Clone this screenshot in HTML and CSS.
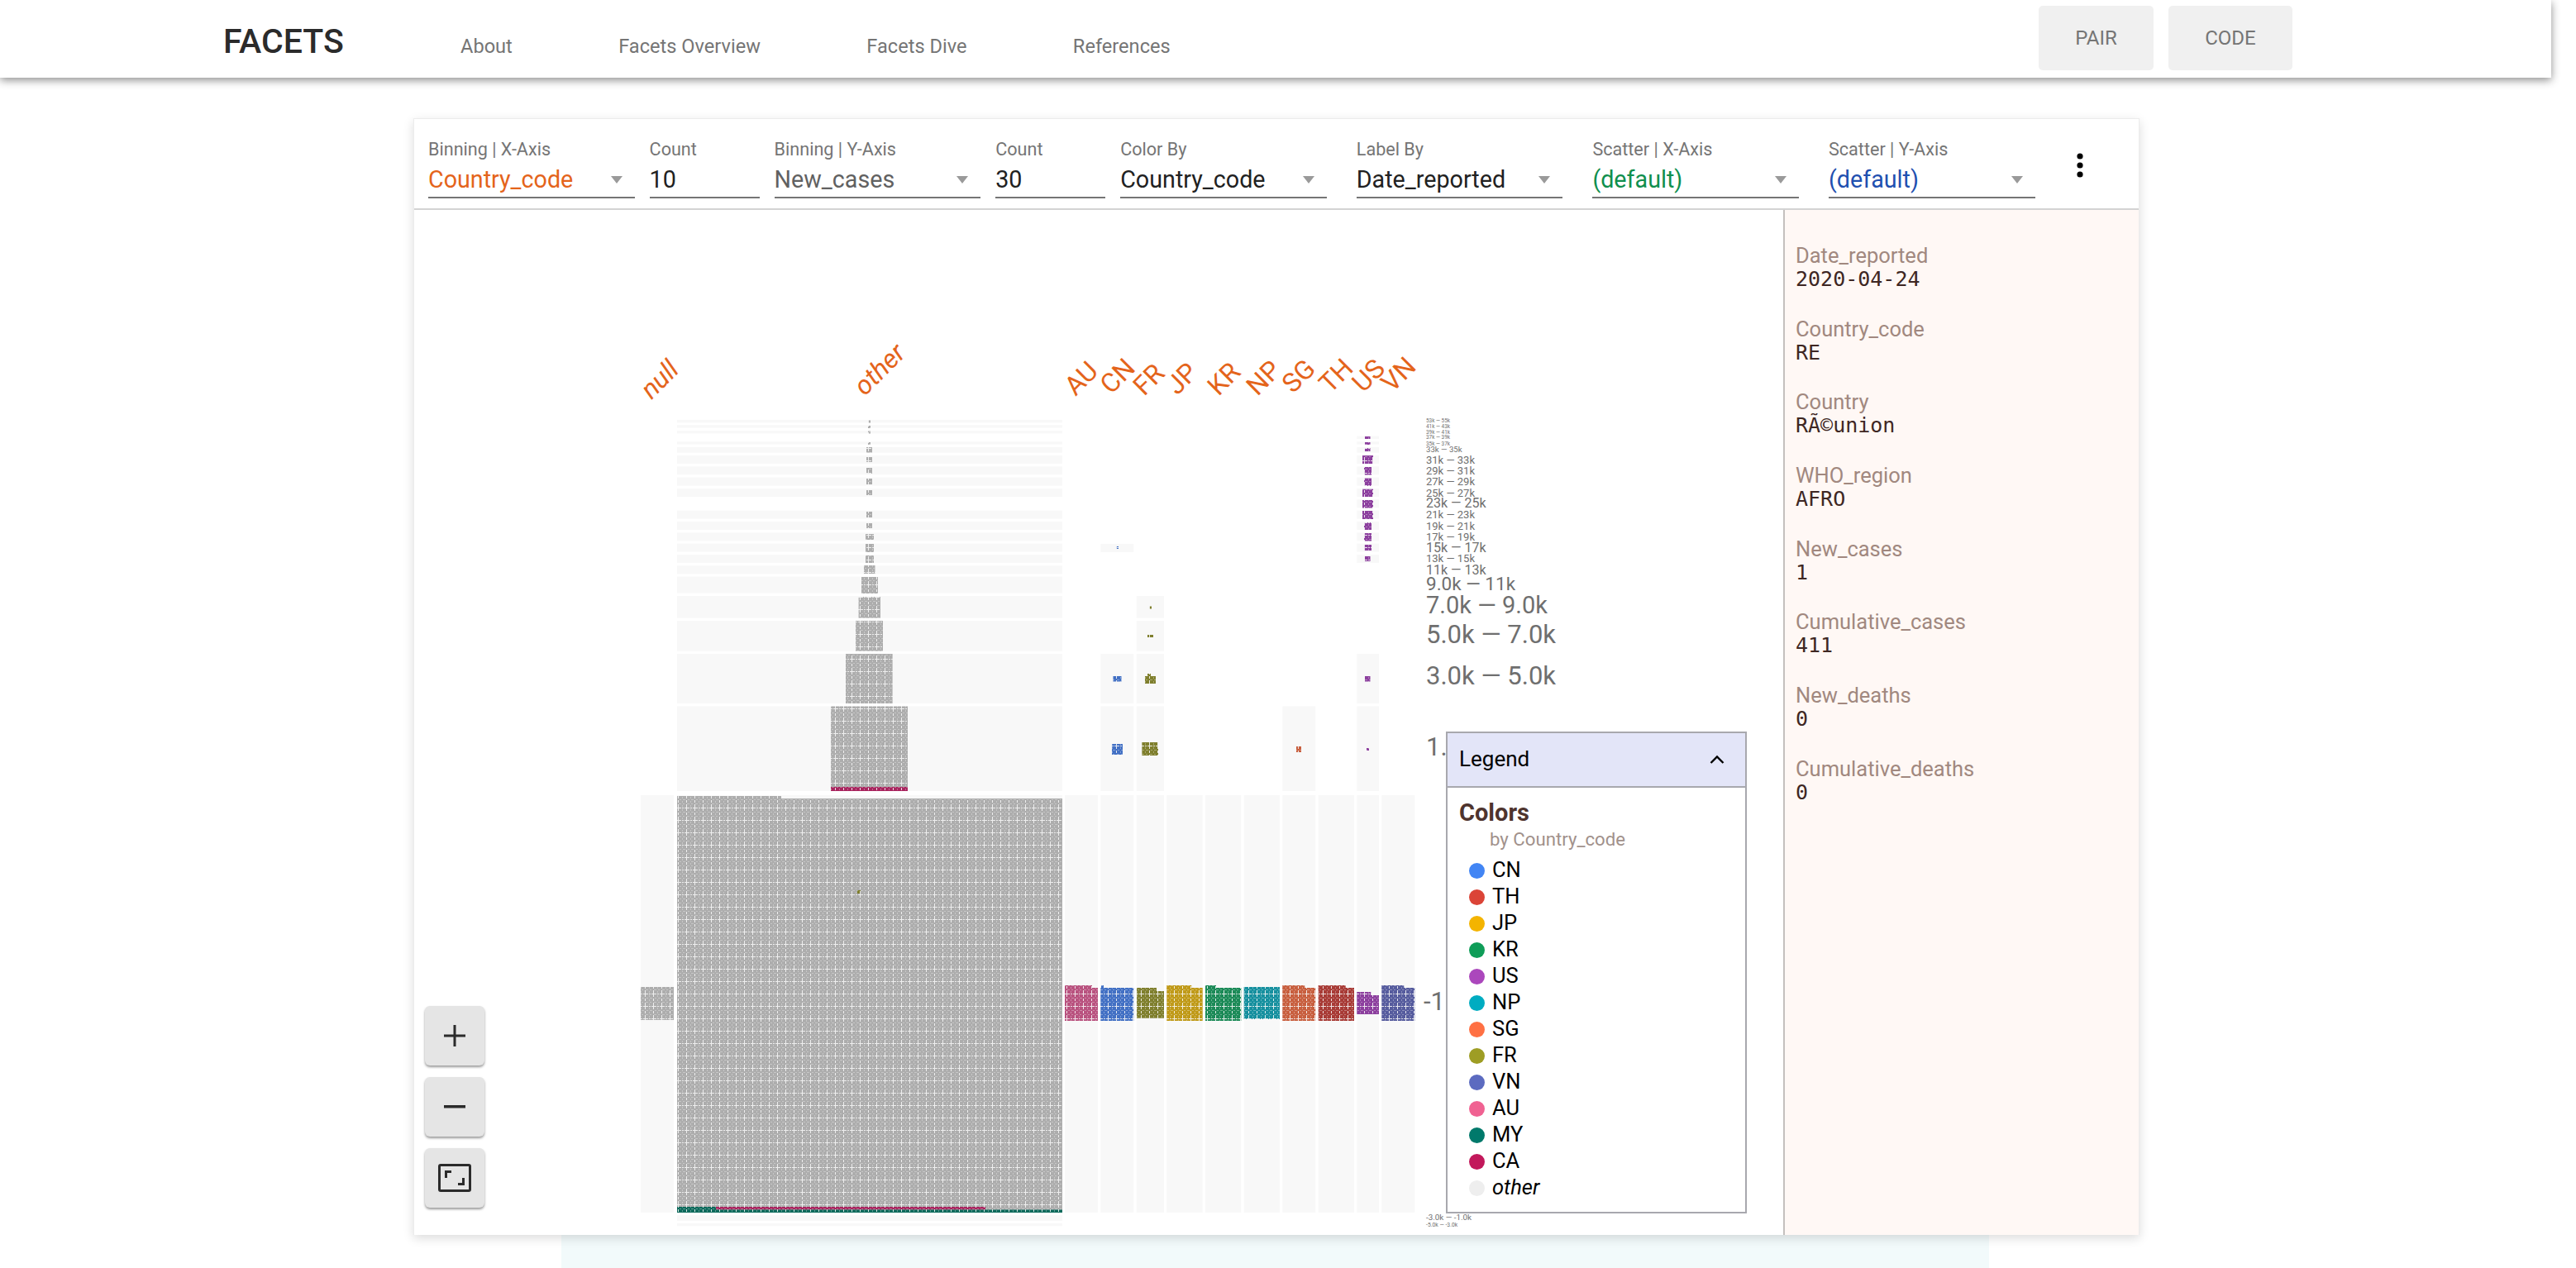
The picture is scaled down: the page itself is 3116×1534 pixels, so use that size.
FILE: index.html
```html
<!DOCTYPE html>
<html lang="en">
<head>
<meta charset="utf-8">
<title>Facets</title>
<link rel="stylesheet" href="styles.css">
</head>
<body>
<header class="topbar">
  <div class="logo">FACETS</div>
  <nav class="nav">
    <a class="nav-link">About</a>
    <a class="nav-link">Facets Overview</a>
    <a class="nav-link">Facets Dive</a>
    <a class="nav-link">References</a>
  </nav>
  <div class="top-actions">
    <button class="top-btn pair">PAIR</button>
    <button class="top-btn code">CODE</button>
  </div>
</header>

<main class="panel">
  <div class="toolbar">
    <div class="field sel"><span class="f-label">Binning | X-Axis</span><div class="f-value orange"><span>Country_code</span><i class="arrow"></i></div></div>
    <div class="field num"><span class="f-label">Count</span><div class="f-value"><span>10</span></div></div>
    <div class="field sel"><span class="f-label">Binning | Y-Axis</span><div class="f-value grey"><span>New_cases</span><i class="arrow"></i></div></div>
    <div class="field num"><span class="f-label">Count</span><div class="f-value"><span>30</span></div></div>
    <div class="field sel"><span class="f-label">Color By</span><div class="f-value"><span>Country_code</span><i class="arrow"></i></div></div>
    <div class="field sel far"><span class="f-label">Label By</span><div class="f-value"><span>Date_reported</span><i class="arrow"></i></div></div>
    <div class="field sel far"><span class="f-label">Scatter | X-Axis</span><div class="f-value green"><span>(default)</span><i class="arrow"></i></div></div>
    <div class="field sel far"><span class="f-label">Scatter | Y-Axis</span><div class="f-value blue"><span>(default)</span><i class="arrow"></i></div></div>
    <svg class="more" viewBox="0 0 8 30" width="8" height="30"><circle cx="4" cy="4" r="3.6"/><circle cx="4" cy="15" r="3.6"/><circle cx="4" cy="26" r="3.6"/></svg>
  </div>
  <div class="content">
    <section class="stage">
      <svg class="chart" viewBox="501 254 1656 1240" width="1656" height="1240">
        <defs>
          <pattern id="tile" width="10" height="15" patternUnits="userSpaceOnUse" x="1" y="3">
            <rect width="10" height="15" fill="#fff"/>
            <g fill="#222">
              <rect x="9" y="0" width="1" height="3"/><rect x="9" y="5" width="1" height="3"/><rect x="9" y="10" width="1" height="4"/>
              <rect x="0" y="14" width="3" height="1"/><rect x="4" y="14" width="2" height="1"/><rect x="7" y="14" width="3" height="1"/>
            </g>
            <g fill="#aaa">
              <rect x="1" y="4" width="2" height="1"/><rect x="5" y="4" width="3" height="1"/>
              <rect x="0" y="9" width="3" height="1"/><rect x="5" y="9" width="2" height="1"/>
              <rect x="4" y="1" width="1" height="2"/><rect x="4" y="6" width="1" height="2"/><rect x="4" y="11" width="1" height="2"/>
            </g>
          </pattern>
          <mask id="dots" maskUnits="userSpaceOnUse" x="501" y="254" width="1656" height="1240">
            <rect x="501" y="254" width="1656" height="1240" fill="url(#tile)"/>
          </mask>
        </defs>

        <g class="axis">
          <text class="em" transform="translate(788 484) rotate(-45)">null</text>
          <text class="em" transform="translate(1046 480) rotate(-45)">other</text>
          <text transform="translate(1301 480) rotate(-45)">AU</text>
          <text transform="translate(1344 478) rotate(-45)">CN</text>
          <text transform="translate(1384 480) rotate(-45)">FR</text>
          <text transform="translate(1424 479) rotate(-45)">JP</text>
          <text transform="translate(1474 480) rotate(-45)">KR</text>
          <text transform="translate(1521 480) rotate(-45)">NP</text>
          <text transform="translate(1564 477) rotate(-45)">SG</text>
          <text transform="translate(1609 477) rotate(-45)">TH</text>
          <text transform="translate(1649 476) rotate(-45)">US</text>
          <text transform="translate(1684 476) rotate(-45)">VN</text>
        </g>

        <g class="cells">
          <rect x="775" y="962" width="40" height="505"/>
          <rect x="819" y="508" width="466" height="3.3"/><rect x="819" y="514.3" width="466" height="3.3"/><rect x="819" y="521" width="466" height="3.3"/>
          <rect x="819" y="534.3" width="466" height="3.3"/><rect x="819" y="541" width="466" height="6.7"/><rect x="819" y="551" width="466" height="10"/>
          <rect x="819" y="564.3" width="466" height="10"/><rect x="819" y="577.6" width="466" height="10"/><rect x="819" y="591" width="466" height="10"/>
          <rect x="819" y="617.6" width="466" height="10"/><rect x="819" y="631" width="466" height="10"/><rect x="819" y="644.3" width="466" height="10"/>
          <rect x="819" y="657.6" width="466" height="10"/><rect x="819" y="671" width="466" height="10"/><rect x="819" y="684.3" width="466" height="10"/>
          <rect x="819" y="697.6" width="466" height="20"/><rect x="819" y="721" width="466" height="26.7"/><rect x="819" y="751" width="466" height="36.7"/>
          <rect x="819" y="791" width="466" height="60"/><rect x="819" y="854.5" width="466" height="102.5"/><rect x="819" y="962" width="466" height="505"/>
          <rect x="819" y="1470" width="466" height="7"/><rect x="819" y="1480" width="466" height="3.3"/>

          <rect x="1288" y="962" width="40" height="505"/><rect x="1331.3" y="962" width="40" height="505"/><rect x="1374.7" y="962" width="33.3" height="505"/>
          <rect x="1411.3" y="962" width="43.4" height="505"/><rect x="1458" y="962" width="43.3" height="505"/><rect x="1504.7" y="962" width="43.3" height="505"/>
          <rect x="1551.3" y="962" width="40" height="505"/><rect x="1594.7" y="962" width="43.3" height="505"/><rect x="1641.3" y="962" width="26.7" height="505"/>
          <rect x="1671.3" y="962" width="40" height="505"/>

          <rect x="1331.3" y="658" width="40" height="10"/><rect x="1331.3" y="791" width="40" height="60"/><rect x="1331.3" y="854.5" width="40" height="102.5"/>
          <rect x="1374.7" y="721" width="33.3" height="26.7"/><rect x="1374.7" y="751" width="33.3" height="36.7"/><rect x="1374.7" y="791" width="33.3" height="60"/><rect x="1374.7" y="854.5" width="33.3" height="102.5"/>
          <rect x="1551.3" y="854.5" width="40" height="102.5"/>

          <rect x="1641.3" y="527.6" width="26.7" height="3.3"/><rect x="1641.3" y="534.3" width="26.7" height="3.3"/><rect x="1641.3" y="541" width="26.7" height="6.7"/>
          <rect x="1641.3" y="551" width="26.7" height="10"/><rect x="1641.3" y="564.3" width="26.7" height="10"/><rect x="1641.3" y="577.6" width="26.7" height="10"/>
          <rect x="1641.3" y="591" width="26.7" height="10"/><rect x="1641.3" y="604.3" width="26.7" height="10"/><rect x="1641.3" y="617.6" width="26.7" height="10"/>
          <rect x="1641.3" y="631" width="26.7" height="10"/><rect x="1641.3" y="644.3" width="26.7" height="10"/><rect x="1641.3" y="657.6" width="26.7" height="10"/>
          <rect x="1641.3" y="671" width="26.7" height="10"/><rect x="1641.3" y="791" width="26.7" height="60"/><rect x="1641.3" y="854.5" width="26.7" height="102.5"/>
        </g>

        <g class="blocks" mask="url(#dots)">
          <g class="k-other">
            <rect x="775" y="1194" width="40" height="40"/>
            <rect x="1050" y="508.5" width="3" height="3"/><rect x="1050" y="515" width="3" height="3"/><rect x="1050" y="521.5" width="3" height="3"/>
            <rect x="1050" y="535" width="3" height="3"/><rect x="1048" y="541" width="7" height="6.5"/><rect x="1048" y="553" width="7" height="6"/>
            <rect x="1048" y="566" width="7" height="7"/><rect x="1048" y="579" width="7" height="7"/><rect x="1048" y="593" width="7" height="6"/>
            <rect x="1048" y="619" width="7" height="7"/><rect x="1048" y="633" width="7" height="6"/><rect x="1047" y="646" width="10" height="7"/>
            <rect x="1047" y="658" width="10" height="10"/><rect x="1047" y="672" width="10" height="9"/><rect x="1045" y="684" width="13.5" height="10"/>
            <rect x="1042" y="698" width="20" height="20"/><rect x="1038.6" y="722" width="26.4" height="25.6"/><rect x="1035" y="751" width="33" height="36.6"/>
            <rect x="1023" y="791" width="56.6" height="60"/><rect x="1005" y="854.5" width="93" height="102.5"/>
            <rect x="819" y="963" width="126" height="4"/><rect x="819" y="966" width="466" height="501"/>
          </g>
          <rect class="k-ca" x="1005" y="952" width="93" height="5"/>
          <rect class="k-my" x="819" y="1460" width="47" height="7"/><rect class="k-ca" x="866" y="1460" width="326" height="3.5"/><rect class="k-my" x="866" y="1463.5" width="419" height="3.5"/>
          <rect class="k-fr" x="1037" y="1077" width="4" height="4"/>

          <g class="k-au"><rect x="1288" y="1192" width="33" height="4"/><rect x="1288" y="1195" width="40" height="40"/></g>
          <g class="k-cn"><rect x="1332" y="1192" width="3" height="4"/><rect x="1331.3" y="1195" width="40" height="40"/>
            <rect x="1350" y="661" width="3" height="3"/><rect x="1346.5" y="818" width="10" height="6.5"/><rect x="1345" y="900" width="13" height="13"/></g>
          <g class="k-fr"><rect x="1375" y="1195" width="24" height="4"/><rect x="1375" y="1199" width="33" height="32.7"/>
            <rect x="1390" y="733.5" width="3" height="3"/><rect x="1388" y="768" width="7" height="3"/><rect x="1388" y="815" width="4" height="3"/><rect x="1385" y="818" width="13" height="9"/><rect x="1381.4" y="898" width="19.6" height="16"/></g>
          <g class="k-jp"><rect x="1411.3" y="1192" width="30" height="4"/><rect x="1411.3" y="1195" width="43.4" height="40"/></g>
          <g class="k-kr"><rect x="1458" y="1192" width="13" height="4"/><rect x="1458" y="1195" width="43.3" height="40"/></g>
          <g class="k-np"><rect x="1504.7" y="1194" width="43.3" height="39"/></g>
          <g class="k-sg"><rect x="1551.3" y="1192" width="27" height="4"/><rect x="1551.3" y="1195" width="40" height="40"/><rect x="1568" y="903" width="6" height="7"/></g>
          <g class="k-th"><rect x="1594.7" y="1192" width="33" height="4"/><rect x="1594.7" y="1195" width="43.3" height="40"/></g>
          <g class="k-us"><rect x="1641.3" y="1200" width="17" height="4"/><rect x="1641.3" y="1204" width="26.7" height="23"/>
            <rect x="1651" y="528" width="6.5" height="3"/><rect x="1651" y="535" width="6.5" height="3"/><rect x="1651" y="542" width="6.5" height="4"/>
            <rect x="1648" y="551" width="13" height="10"/><rect x="1650" y="565" width="9" height="9.5"/><rect x="1650" y="578.6" width="9" height="9.4"/>
            <rect x="1648" y="591.7" width="13" height="9.3"/><rect x="1648" y="605" width="13" height="9.5"/><rect x="1648" y="618" width="13" height="10"/>
            <rect x="1650" y="632" width="9" height="9"/><rect x="1650" y="645" width="9" height="9.5"/><rect x="1650" y="659" width="9" height="7"/>
            <rect x="1651" y="673" width="6.5" height="6"/><rect x="1651" y="818" width="6.5" height="6.5"/><rect x="1653" y="905" width="3" height="3"/></g>
          <g class="k-vn"><rect x="1671.3" y="1192" width="27" height="4"/><rect x="1671.3" y="1195" width="40" height="40"/></g>
        </g>

        <g class="ticks">
          <text class="t8" x="1725" y="511">53k — 55k</text>
          <text class="t8" x="1725" y="518">41k — 43k</text>
          <text class="t8" x="1725" y="525">39k — 41k</text>
          <text class="t8" x="1725" y="531">37k — 39k</text>
          <text class="t8" x="1725" y="538.5">35k — 37k</text>
          <text class="t12" x="1725" y="547">33k — 35k</text>
          <text class="t16" x="1725" y="560.5">31k — 33k</text>
          <text class="t16" x="1725" y="573.5">29k — 31k</text>
          <text class="t16" x="1725" y="586.5">27k — 29k</text>
          <text class="t16" x="1725" y="601">25k — 27k</text>
          <text class="t20" x="1725" y="614">23k — 25k</text>
          <text class="t16" x="1725" y="626.5">21k — 23k</text>
          <text class="t16" x="1725" y="641">19k — 21k</text>
          <text class="t16" x="1725" y="654">17k — 19k</text>
          <text class="t20" x="1725" y="667.5">15k — 17k</text>
          <text class="t16" x="1725" y="680">13k — 15k</text>
          <text class="t20" x="1725" y="694.5">11k — 13k</text>
          <text class="t24" x="1725" y="714">9.0k — 11k</text>
          <text class="t30" x="1725" y="742">7.0k — 9.0k</text>
          <text class="t32" x="1725" y="778">5.0k — 7.0k</text>
          <text class="t32" x="1725" y="828">3.0k — 5.0k</text>
          <text class="t32" x="1725" y="914">1.0k — 3.0k</text>
          <text class="t32" x="1722" y="1222">-1.0k — 1.0k</text>
          <text class="t12b" x="1725" y="1476">-3.0k — -1.0k</text>
          <text class="t8b" x="1725" y="1483.5">-5.0k — -3.0k</text>
        </g>
      </svg>

      <div class="zoom-btns">
        <button class="zoom-btn"><svg viewBox="0 0 26 26" width="26" height="26"><path d="M11.5 0h3v11.5H26v3H14.5V26h-3V14.5H0v-3h11.5z"/></svg></button>
        <button class="zoom-btn"><svg viewBox="0 0 26 26" width="26" height="26"><path d="M0 11h26v3.5H0z"/></svg></button>
        <button class="zoom-btn"><svg viewBox="0 0 40 34" width="40" height="34"><path fill-rule="evenodd" d="M3 0h34a3 3 0 0 1 3 3v28a3 3 0 0 1-3 3H3a3 3 0 0 1-3-3V3a3 3 0 0 1 3-3zm0 3v28h34V3z"/><path d="M8 8h8v3h-5v6H8zM32 26h-8v-3h5v-6h3z"/></svg></button>
      </div>

      <aside class="legend">
        <div class="legend-head"><span>Legend</span>
          <svg viewBox="0 0 18 11" width="18" height="11"><path d="M1.5 10 9 2.5 16.5 10" fill="none" stroke="#000" stroke-width="2.4"/></svg>
        </div>
        <div class="legend-body">
          <div class="legend-title">Colors</div>
          <div class="legend-sub">by Country_code</div>
          <ul class="legend-list">
            <li><i class="dot d-cn"></i>CN</li>
            <li><i class="dot d-th"></i>TH</li>
            <li><i class="dot d-jp"></i>JP</li>
            <li><i class="dot d-kr"></i>KR</li>
            <li><i class="dot d-us"></i>US</li>
            <li><i class="dot d-np"></i>NP</li>
            <li><i class="dot d-sg"></i>SG</li>
            <li><i class="dot d-fr"></i>FR</li>
            <li><i class="dot d-vn"></i>VN</li>
            <li><i class="dot d-au"></i>AU</li>
            <li><i class="dot d-my"></i>MY</li>
            <li><i class="dot d-ca"></i>CA</li>
            <li class="em"><i class="dot d-other"></i>other</li>
          </ul>
        </div>
      </aside>
    </section>

    <aside class="details">
      <dl>
        <dt>Date_reported</dt><dd>2020-04-24</dd>
        <dt>Country_code</dt><dd>RE</dd>
        <dt>Country</dt><dd>RÃ©union</dd>
        <dt>WHO_region</dt><dd>AFRO</dd>
        <dt>New_cases</dt><dd>1</dd>
        <dt>Cumulative_cases</dt><dd>411</dd>
        <dt>New_deaths</dt><dd>0</dd>
        <dt>Cumulative_deaths</dt><dd>0</dd>
      </dl>
    </aside>
  </div>
</main>
<div class="strip"></div>
</body>
</html>
```
FILE: styles.css
```css
* { box-sizing: border-box; }
html, body { margin: 0; padding: 0; height: 1534px; overflow: hidden; background: #fff; }
body { font-family: Roboto, "Liberation Sans", sans-serif; color: #212121; }

.topbar {
  width: 3086px; height: 94px; background: #fff;
  display: flex; align-items: flex-start;
  padding-left: 270px;
  box-shadow: 0 3px 10px rgba(0,0,0,.45);
  position: relative;
}
.logo { font-size: 41px; font-weight: 500; color: #2b2b2b; line-height: 42px; margin-top: 29px; width: 287px; }
.nav { display: flex; gap: 128.4px; margin-top: 42px; }
.nav-link { font-size: 23.6px; line-height: 28px; color: #757575; }
.top-actions { margin-left: auto; margin-right: 313px; display: flex; gap: 18px; margin-top: 7px; }
.top-btn {
  height: 78px; border: 0; border-radius: 5px; background: #f0f0f0; color: #757575;
  font: 400 24px Roboto, sans-serif; padding: 0;
}
.pair { width: 139px; }
.code { width: 150px; }

.panel {
  width: 2088px; height: 1351px; margin: 49px 0 0 500px;
  background: #fff; border: 1px solid #ececec; border-bottom: 0;
  box-shadow: 0 4px 12px rgba(0,0,0,.14);
  position: relative;
}
.toolbar {
  height: 110px; display: flex; align-items: flex-start; gap: 18px;
  padding: 24px 0 0 17px; border-bottom: 2px solid #d3d3d3;
}
.field { display: flex; flex-direction: column; }
.field.sel { width: 249.6px; }
.field.num { width: 133px; }
.field.far { margin-left: 18px; }
.f-label { font-size: 21.6px; line-height: 26px; color: #757575; white-space: nowrap; }
.f-value {
  height: 46px; display: flex; align-items: center; justify-content: space-between;
  font-size: 28.7px; color: #212121; border-bottom: 2px solid #757575;
  padding: 2px 15px 0 0;
}
.orange { color: #e4641b; }
.grey { color: #616161; }
.green { color: #0f8f4e; }
.blue { color: #1f50b0; }
.arrow { width: 0; height: 0; border-left: 7.5px solid transparent; border-right: 7.5px solid transparent; border-top: 9px solid #9a9a9a; }
.more { margin: 17px 0 0 32px; fill: #000; }

.content { display: flex; height: 1240px; }
.stage { width: 1656px; position: relative; flex: none; overflow: hidden; }
.chart { display: block; font-family: Roboto, sans-serif; }
.axis text { font-size: 32px; fill: #e4641b; }
.axis .em { font-style: italic; }
.cells rect { fill: #f8f8f8; }
.k-other rect { fill: #adadad; }
.k-au rect { fill: #b9527f; }
.k-cn rect { fill: #4270c4; }
.k-fr rect, .k-fr { fill: #7f7f2d; }
.k-jp rect { fill: #c09a18; }
.k-kr rect { fill: #1b8a57; }
.k-np rect { fill: #16909f; }
.k-sg rect { fill: #c85f3f; }
.k-th rect { fill: #a83b36; }
.k-us rect { fill: #8c3f9e; }
.k-vn rect { fill: #565c9e; }
.k-ca { fill: #a8245e; }
.k-my { fill: #0d6a5c; }
.ticks text { fill: #6f6f6f; }
.t8 { font-size: 6.4px; }
.t8b { font-size: 6.8px; }
.t12 { font-size: 9.6px; }
.t12b { font-size: 9.8px; }
.t16 { font-size: 13px; }
.t20 { font-size: 16px; }
.t24 { font-size: 22.5px; }
.t30 { font-size: 29px; }
.t32 { font-size: 31px; }

.zoom-btns { position: absolute; left: 13px; top: 963px; display: flex; flex-direction: column; gap: 14px; }
.zoom-btn {
  width: 72px; height: 72px; border: 0; border-radius: 6px; background: #e5e5e5; padding: 0;
  display: flex; align-items: center; justify-content: center;
  box-shadow: 0 2px 3px rgba(0,0,0,.4);
}
.zoom-btn svg { fill: #2b2b2b; }

.legend {
  position: absolute; left: 1248px; top: 631px; width: 364px; height: 583px;
  background: #fff; border: 2px solid #a8a8ae;
}
.legend-head {
  height: 66px; background: #e3e5f8; border-bottom: 2px solid #a8a8ae;
  display: flex; align-items: center; justify-content: space-between;
  padding: 0 25px 2px 14px; font-size: 26px; color: #000;
}
.legend-body { padding: 13px 14px 0; }
.legend-title { font-size: 29px; font-weight: 700; line-height: 34px; color: #4e342e; }
.legend-sub { font-size: 22.2px; line-height: 30px; color: #a1918b; margin-left: 37px; }
.legend-list { list-style: none; margin: 6px 0 0; padding: 0 0 0 12px; }
.legend-list li { height: 32px; display: flex; align-items: center; gap: 9px; font-size: 25.5px; color: #000; }
.legend-list .em { font-style: italic; }
.dot { width: 19px; height: 19px; border-radius: 50%; flex: none; margin-top: 2px; }
.d-cn { background: #4285f4; }
.d-th { background: #db4437; }
.d-jp { background: #f4b400; }
.d-kr { background: #0f9d58; }
.d-us { background: #ab47bc; }
.d-np { background: #00acc1; }
.d-sg { background: #ff7043; }
.d-fr { background: #9e9d24; }
.d-vn { background: #5c6bc0; }
.d-au { background: #f06292; }
.d-my { background: #00796b; }
.d-ca { background: #c2185b; }
.d-other { background: #eeeeee; }

.details { flex: 1; background: #fff8f5; border-left: 2px solid #c4c0be; padding: 41px 0 0 13px; }
.details dl { margin: 0; }
.details dt { font-size: 25.5px; line-height: 28px; color: #a1887f; }
.details dd { margin: 0 0 31.7px; font: 25px/29px "DejaVu Sans Mono", monospace; color: #3e2723; }

.strip { width: 1727px; height: 40px; margin-left: 679px; background: #f2fafb; }
```
